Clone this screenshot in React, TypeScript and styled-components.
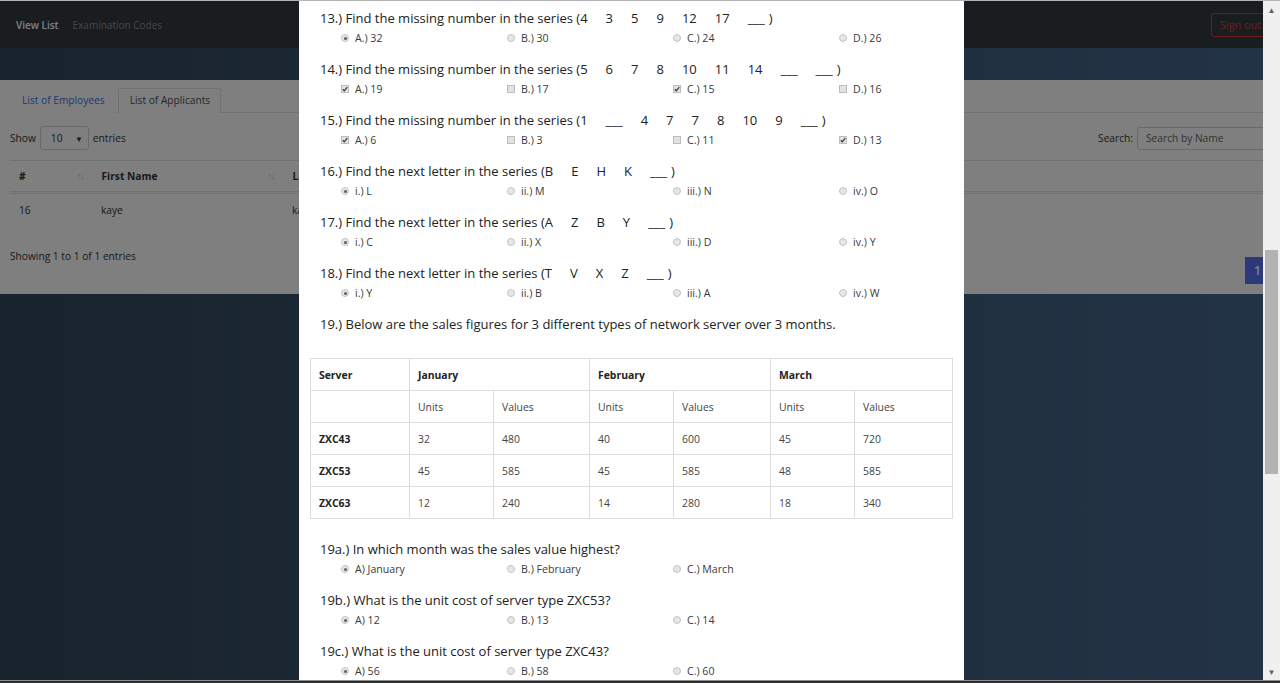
import React from 'react'
import styled, { createGlobalStyle } from 'styled-components'

type Kind = 'radio' | 'checkbox'

interface Question {
  no: string
  text: string
  series?: string[]
  kind: Kind
  options: string[]
  checked: number[]
}

const seriesQuestions: Question[] = [
  {
    no: '13.)',
    text: 'Find the missing number in the series',
    series: ['4', '3', '5', '9', '12', '17', '___'],
    kind: 'radio',
    options: ['A.) 32', 'B.) 30', 'C.) 24', 'D.) 26'],
    checked: [0],
  },
  {
    no: '14.)',
    text: 'Find the missing number in the series',
    series: ['5', '6', '7', '8', '10', '11', '14', '___', '___'],
    kind: 'checkbox',
    options: ['A.) 19', 'B.) 17', 'C.) 15', 'D.) 16'],
    checked: [0, 2],
  },
  {
    no: '15.)',
    text: 'Find the missing number in the series',
    series: ['1', '___', '4', '7', '7', '8', '10', '9', '___'],
    kind: 'checkbox',
    options: ['A.) 6', 'B.) 3', 'C.) 11', 'D.) 13'],
    checked: [0, 3],
  },
  {
    no: '16.)',
    text: 'Find the next letter in the series',
    series: ['B', 'E', 'H', 'K', '___'],
    kind: 'radio',
    options: ['i.) L', 'ii.) M', 'iii.) N', 'iv.) O'],
    checked: [0],
  },
  {
    no: '17.)',
    text: 'Find the next letter in the series',
    series: ['A', 'Z', 'B', 'Y', '___'],
    kind: 'radio',
    options: ['i.) C', 'ii.) X', 'iii.) D', 'iv.) Y'],
    checked: [0],
  },
  {
    no: '18.)',
    text: 'Find the next letter in the series',
    series: ['T', 'V', 'X', 'Z', '___'],
    kind: 'radio',
    options: ['i.) Y', 'ii.) B', 'iii.) A', 'iv.) W'],
    checked: [0],
  },
]

const followUps: Question[] = [
  {
    no: '19a.)',
    text: 'In which month was the sales value highest?',
    kind: 'radio',
    options: ['A) January', 'B.) February', 'C.) March'],
    checked: [0],
  },
  {
    no: '19b.)',
    text: 'What is the unit cost of server type ZXC53?',
    kind: 'radio',
    options: ['A) 12', 'B.) 13', 'C.) 14'],
    checked: [0],
  },
  {
    no: '19c.)',
    text: 'What is the unit cost of server type ZXC43?',
    kind: 'radio',
    options: ['A) 56', 'B.) 58', 'C.) 60'],
    checked: [0],
  },
]

const sales = [
  { server: 'ZXC43', values: ['32', '480', '40', '600', '45', '720'] },
  { server: 'ZXC53', values: ['45', '585', '45', '585', '48', '585'] },
  { server: 'ZXC63', values: ['12', '240', '14', '280', '18', '340'] },
]

const salesCols = [99, 84, 96, 84, 97, 84, 98]

// applicant list behind the modal
const listCols = [
  { title: '#', width: 82, sortable: true },
  { title: 'First Name', width: 191, sortable: true },
  { title: 'Last Name', width: 191, sortable: true },
  { title: 'Date Taken', width: 191, sortable: true },
  { title: 'Action', sortable: false },
]

const Check = () => (
  <svg width="6" height="6" viewBox="0 0 6 6">
    <path d="M0.8 3.2 L2.3 4.8 L5.3 1.2" stroke="#3a3a3a" strokeWidth="1.3" fill="none" />
  </svg>
)

const QuestionBlock: React.FC<{ q: Question }> = ({ q }) => (
  <Block>
    <Title>
      {q.no} {q.text}
      {q.series && (
        <>
          {' ('}
          {q.series.map((token, i) =>
            i === 0 ? <span key={i}>{token}</span> : <Token key={i}>{token}</Token>
          )}
          <Close>)</Close>
        </>
      )}
    </Title>
    <Options>
      {q.options.map((opt, i) => {
        const on = q.checked.includes(i)
        return (
          <Option key={i}>
            {q.kind === 'radio' ? <Radio $on={on} /> : <Box>{on && <Check />}</Box>}
            {opt}
          </Option>
        )
      })}
    </Options>
  </Block>
)

const App: React.FC = () => {
  return (
    <>
      <GlobalStyle />
      <Screen>
        <TopLine />
        <Main>
          <Page>
            <Navbar>
              <NavLinks>
                <NavLink $active>View List</NavLink>
                <NavLink>Examination Codes</NavLink>
              </NavLinks>
              <SignOut>Sign out</SignOut>
            </Navbar>
            <Band />
            <Panel>
              <Tabs>
                <Tab>List of Employees</Tab>
                <Tab $active>List of Applicants</Tab>
              </Tabs>
              <Controls>
                <Length>
                  Show
                  <Select>
                    10<Caret>▼</Caret>
                  </Select>
                  entries
                </Length>
                <SearchBox>
                  Search:
                  <SearchInput placeholder="Search by Name" />
                </SearchBox>
              </Controls>
              <ListTable>
                <colgroup>
                  {listCols.map((c) => (
                    <col key={c.title} style={c.width ? { width: c.width } : undefined} />
                  ))}
                </colgroup>
                <thead>
                  <tr>
                    {listCols.map((c) => (
                      <ListHead key={c.title}>
                        {c.title}
                        {c.sortable && <Sort>↑↓</Sort>}
                      </ListHead>
                    ))}
                  </tr>
                </thead>
                <tbody>
                  <tr>
                    <ListCell>16</ListCell>
                    <ListCell>kaye</ListCell>
                    <ListCell>kaye</ListCell>
                    <ListCell>2018-03-12</ListCell>
                    <ListCell />
                  </tr>
                </tbody>
              </ListTable>
              <Footer>
                <span>Showing 1 to 1 of 1 entries</span>
                <PageButton>1</PageButton>
              </Footer>
            </Panel>

            <Backdrop>
              <Modal>
                {seriesQuestions.map((q) => (
                  <QuestionBlock key={q.no} q={q} />
                ))}
                <Title>19.) Below are the sales figures for 3 different types of network server over 3 months.</Title>
                <SalesTable>
                  <colgroup>
                    {salesCols.map((w, i) => (
                      <col key={i} style={{ width: w }} />
                    ))}
                  </colgroup>
                  <tbody>
                    <tr>
                      <SalesCell $bold>Server</SalesCell>
                      <SalesCell $bold colSpan={2}>
                        January
                      </SalesCell>
                      <SalesCell $bold colSpan={2}>
                        February
                      </SalesCell>
                      <SalesCell $bold colSpan={2}>
                        March
                      </SalesCell>
                    </tr>
                    <tr>
                      <SalesCell />
                      {['Units', 'Values', 'Units', 'Values', 'Units', 'Values'].map((h, i) => (
                        <SalesCell key={i}>{h}</SalesCell>
                      ))}
                    </tr>
                    {sales.map((row) => (
                      <tr key={row.server}>
                        <SalesCell $bold>{row.server}</SalesCell>
                        {row.values.map((v, i) => (
                          <SalesCell key={i}>{v}</SalesCell>
                        ))}
                      </tr>
                    ))}
                  </tbody>
                </SalesTable>
                {followUps.map((q) => (
                  <QuestionBlock key={q.no} q={q} />
                ))}
              </Modal>
            </Backdrop>
          </Page>
          <Scrollbar>
            <Arrow>▲</Arrow>
            <Track>
              <Thumb />
            </Track>
            <Arrow>▼</Arrow>
          </Scrollbar>
        </Main>
        <Taskbar />
      </Screen>
    </>
  )
}

export default App

const GlobalStyle = createGlobalStyle`
  html, body {
    margin: 0;
    padding: 0;
    height: 100%;
    overflow: hidden;
  }
  body {
    font-family: 'Open Sans', 'Liberation Sans', sans-serif;
    color: #333;
  }
`

const Screen = styled.div`
  display: flex;
  flex-direction: column;
  width: 1280px;
  height: 683px;
`

const TopLine = styled.div`
  height: 1px;
  background: #b4b4b4;
`

const Main = styled.div`
  flex: 1;
  display: flex;
  min-height: 0;
`

const Page = styled.div`
  position: relative;
  flex: 1;
  overflow: hidden;
  background: linear-gradient(90deg, #32465b 0%, #46678c 100%);
`

const Navbar = styled.div`
  display: flex;
  align-items: center;
  justify-content: space-between;
  height: 47px;
  padding-left: 16px;
  margin-right: -7px;
  background: #343a40;
`

const NavLinks = styled.div`
  display: flex;
  gap: 14px;
`

const NavLink = styled.span<{ $active?: boolean }>`
  font-size: 10px;
  font-weight: ${(p) => (p.$active ? 600 : 400)};
  color: ${(p) => (p.$active ? '#ffffff' : 'rgba(255,255,255,0.45)')};
`

const SignOut = styled.span`
  height: 22px;
  line-height: 22px;
  padding: 0 8px;
  border: 1px solid #dc3545;
  border-radius: 3px;
  font-size: 10.8px;
  color: #dc3545;
  white-space: nowrap;
`

const Band = styled.div`
  height: 32px;
`

const Panel = styled.div`
  display: flex;
  flex-direction: column;
  padding: 8px 0 10px 10px;
  margin-right: -6px;
  background: #fff;
  font-size: 10.2px;
  color: #333;
`

const Tabs = styled.div`
  display: flex;
  gap: 2px;
  border-bottom: 1px solid #dee2e6;
`

const Tab = styled.div<{ $active?: boolean }>`
  height: 23px;
  line-height: 23px;
  padding: 0 10px 0 11px;
  margin-bottom: -1px;
  color: ${(p) => (p.$active ? '#495057' : '#3f6fe8')};
  background: #fff;
  border: 1px solid ${(p) => (p.$active ? '#dee2e6' : 'transparent')};
  border-bottom-color: ${(p) => (p.$active ? '#fff' : 'transparent')};
  border-radius: 3px 3px 0 0;
`

const Controls = styled.div`
  display: flex;
  align-items: center;
  justify-content: space-between;
  margin-top: 13px;
  height: 24px;
`

const Length = styled.div`
  display: flex;
  align-items: center;
  gap: 4px;
`

const Select = styled.div`
  display: flex;
  align-items: center;
  justify-content: space-between;
  box-sizing: border-box;
  width: 49px;
  height: 24px;
  padding: 0 5px 0 10px;
  border: 1px solid #ced4da;
  border-radius: 3px;
`

const Caret = styled.span`
  font-size: 8px;
  color: #333;
`

const SearchBox = styled.div`
  display: flex;
  align-items: center;
  gap: 4px;
`

const SearchInput = styled.input`
  box-sizing: border-box;
  width: 132px;
  height: 23px;
  padding: 0 8px;
  border: 1px solid #ced4da;
  border-radius: 3px;
  font-family: inherit;
  font-size: 10.2px;
  &::placeholder {
    color: #666;
  }
`

const ListTable = styled.table`
  margin-top: 10px;
  width: 100%;
  border-collapse: collapse;
  table-layout: fixed;
`

const ListHead = styled.th`
  height: 30px;
  padding: 0 8px 0 9px;
  text-align: left;
  font-weight: 700;
  border-top: 1px solid #dee2e6;
  border-bottom: 3px double #dee2e6;
  border-left: 1px solid #fff;
  &:first-child {
    border-left: 0;
  }
`

const Sort = styled.span`
  float: right;
  font-size: 9px;
  font-weight: 400;
  color: #bbb;
  letter-spacing: -1px;
`

const ListCell = styled.td`
  height: 32px;
  padding: 0 9px;
`

const Footer = styled.div`
  display: flex;
  align-items: flex-start;
  justify-content: space-between;
  margin-top: 22px;
  line-height: 16px;
`

const PageButton = styled.span`
  margin-top: 9px;
  width: 24px;
  height: 27px;
  line-height: 27px;
  padding-left: 9px;
  box-sizing: border-box;
  background: #5670f2;
  color: #fff;
  font-size: 12px;
  font-weight: 600;
`

const Backdrop = styled.div`
  position: absolute;
  inset: 0;
  display: flex;
  justify-content: center;
  background: rgba(0, 0, 0, 0.5);
`

const Modal = styled.div`
  width: 665px;
  height: 100%;
  box-sizing: border-box;
  padding: 7px 11px 0;
  overflow: hidden;
  background: #fff;
`

const Block = styled.div`
  margin-bottom: 13px;
`

const Title = styled.div`
  padding-left: 10px;
  height: 20px;
  line-height: 20px;
  font-size: 13px;
  color: #222;
  white-space: nowrap;
`

const Token = styled.span`
  margin-left: 18px;
`

const Close = styled.span`
  margin-left: 4px;
`

const Options = styled.div`
  display: flex;
  margin-top: 2px;
  padding-left: 31px;
  height: 16px;
`

const Option = styled.div`
  display: flex;
  align-items: center;
  flex-shrink: 0;
  gap: 6px;
  width: 166px;
  font-size: 10.6px;
  color: #3a3a3a;
`

const Radio = styled.span<{ $on: boolean }>`
  display: flex;
  align-items: center;
  justify-content: center;
  box-sizing: border-box;
  width: 8px;
  height: 8px;
  border-radius: 50%;
  border: 1px solid #c4c4c4;
  background: #e6e6e6;
  &::after {
    content: '';
    width: 3px;
    height: 3px;
    border-radius: 50%;
    background: ${(p) => (p.$on ? '#5c5c5c' : 'transparent')};
  }
`

const Box = styled.span`
  display: flex;
  align-items: center;
  justify-content: center;
  box-sizing: border-box;
  width: 8px;
  height: 8px;
  border: 1px solid #bdbdbd;
  background: #e2e2e2;
`

const SalesTable = styled.table`
  margin: 24px 0 20px;
  width: 642px;
  border-collapse: collapse;
  table-layout: fixed;
`

const SalesCell = styled.td<{ $bold?: boolean }>`
  box-sizing: border-box;
  height: 32px;
  padding: 0 8px;
  border: 1px solid #dddddd;
  font-size: 10.4px;
  font-weight: ${(p) => (p.$bold ? 700 : 400)};
  color: ${(p) => (p.$bold ? '#222' : '#444')};
`

const Scrollbar = styled.div`
  display: flex;
  flex-direction: column;
  width: 17px;
  background: #f0f0f0;
`

const Arrow = styled.div`
  height: 17px;
  line-height: 17px;
  text-align: center;
  font-size: 8px;
  color: #606060;
`

const Track = styled.div`
  flex: 1;
  padding: 232px 2px 0;
`

const Thumb = styled.div`
  height: 224px;
  background: #b3b3b3;
`

const Taskbar = styled.div`
  height: 3px;
  background: #2e2e2e;
  border-top: 1px solid #8c8c8c;
  box-sizing: border-box;
`
